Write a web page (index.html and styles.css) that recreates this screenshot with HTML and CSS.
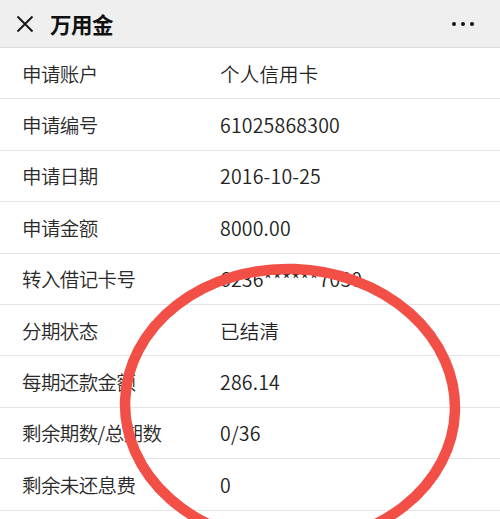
FILE: index.html
```html
<!DOCTYPE html>
<html lang="zh">
<head>
<meta charset="utf-8">
<link rel="stylesheet" href="styles.css">
</head>
<body>
<div class="page">
  <header class="bar">
    <svg class="close" width="18" height="18" viewBox="0 0 18 18"><path d="M1.5 1.5L16.5 16.5M16.5 1.5L1.5 16.5" stroke="#1a1a1a" stroke-width="2" fill="none"/></svg>
    <div class="title">万用金</div>
    <div class="more"><span></span><span></span><span></span></div>
  </header>
  <div class="list">
    <div class="row"><div class="label">申请账户</div><div class="value">个人信用卡</div></div>
    <div class="row"><div class="label">申请编号</div><div class="value">61025868300</div></div>
    <div class="row"><div class="label">申请日期</div><div class="value">2016-10-25</div></div>
    <div class="row"><div class="label">申请金额</div><div class="value">8000.00</div></div>
    <div class="row"><div class="label">转入借记卡号</div><div class="value">6236******7030</div></div>
    <div class="row"><div class="label">分期状态</div><div class="value">已结清</div></div>
    <div class="row"><div class="label">每期还款金额</div><div class="value">286.14</div></div>
    <div class="row"><div class="label">剩余期数/总期数</div><div class="value">0/36</div></div>
    <div class="row"><div class="label">剩余未还息费</div><div class="value">0</div></div>
  </div>
  <svg class="mark" width="500" height="519" viewBox="0 0 500 519"><ellipse cx="290" cy="406" rx="165" ry="137" transform="rotate(2 290 406)" fill="none" stroke="#f24f46" stroke-width="10.5"/></svg>
</div>
</body>
</html>
```
FILE: styles.css
```css
html, body { margin: 0; padding: 0; }
body { background: #fff; font-family: "Noto Sans CJK SC", "Noto Sans", sans-serif; overflow: hidden; }
.page { position: relative; width: 500px; height: 519px; overflow: hidden; }
.bar { height: 47px; background: #efefef; border-bottom: 1px solid #dcdcdc; display: flex; align-items: center; padding: 0 0 0 16px; box-sizing: content-box; }
.close { flex: none; margin-right: 16px; }
.title { font-size: 21.5px; font-weight: 700; color: #111; flex: 1; line-height: 1; letter-spacing: -0.5px; }
.more { display: flex; gap: 5px; margin-right: 26px; }
.more span { width: 4px; height: 4px; border-radius: 50%; background: #111; }
.list { display: flex; flex-direction: column; }
.row { height: 50.4px; border-bottom: 1px solid #e4e4e4; display: flex; align-items: center; padding-left: 22px; font-size: 19.5px; font-weight: 350; color: #2a2a2a; }
.label { width: 198px; flex: none; letter-spacing: -0.6px; }
.value { color: #222; letter-spacing: 0.2px; }
.mark { position: absolute; left: 0; top: 0; pointer-events: none; }
```
